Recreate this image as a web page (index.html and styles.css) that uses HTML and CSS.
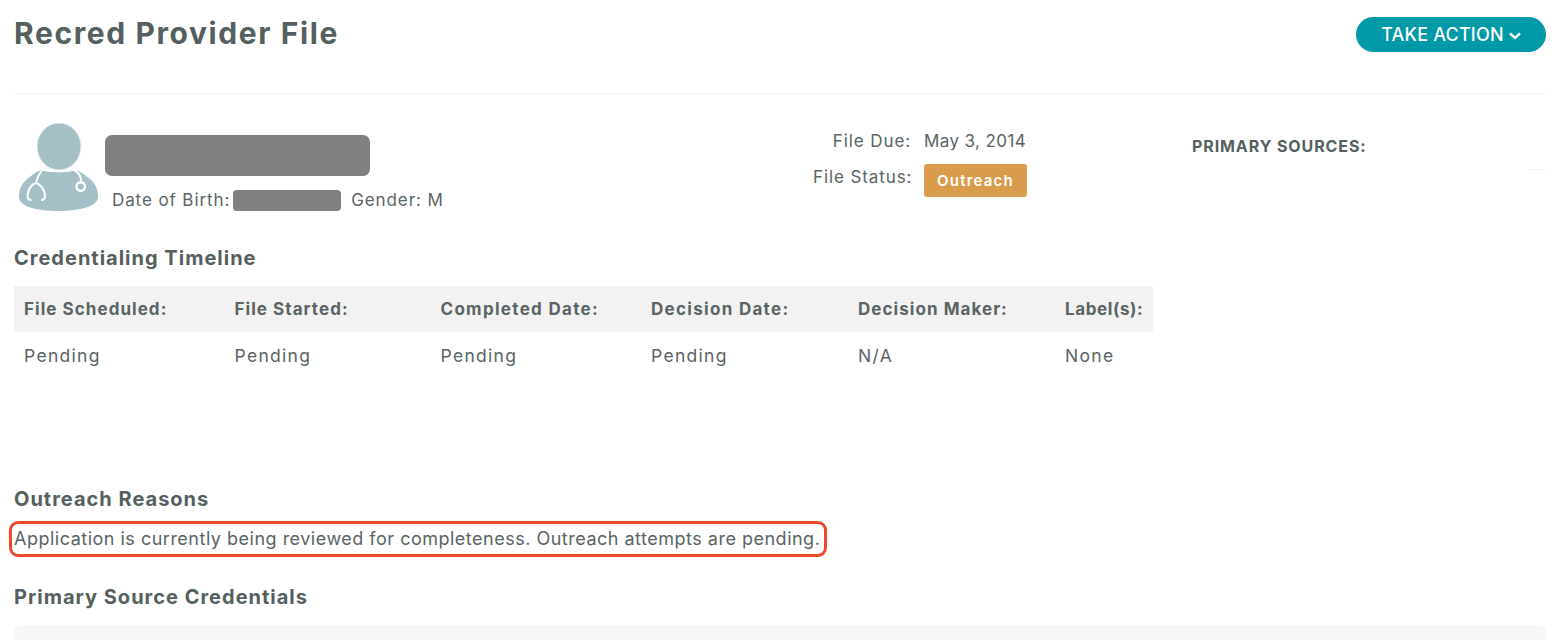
FILE: index.html
```html
<!DOCTYPE html>
<html lang="en">
<head>
<meta charset="utf-8">
<title>Recred Provider File</title>
<link rel="stylesheet" href="styles.css">
</head>
<body>
<div class="page">
  <header class="top">
    <h1>Recred Provider File</h1>
    <button class="action">TAKE ACTION
      <svg class="chev" viewBox="0 0 12 8" width="12" height="8"><path d="M1 1.500 6 6l5-4.500" fill="none" stroke="#fff" stroke-width="2.400"/></svg>
    </button>
  </header>
  <div class="main">
    <div class="left">
      <section class="profile">
        <div class="person">
          <svg class="avatar" viewBox="0 0 82 90" width="82" height="90">
            <path d="M2 74c0-5 1-11 6-16 5-5 11-9 16-11 5 3 30 3 35 0 5 2 11 6 16 11 5 5 6 11 6 16 0 9-18 14-40 14S2 83 2 74z" fill="#a5bfc7"/>
            <ellipse cx="42" cy="23.500" rx="22" ry="23.500" fill="#a5bfc7" stroke="#e6eef0" stroke-width="1"/>
            <path d="M25 47c-2 3-5 8-6 13M14.500 77c-2 0-4-1-4-4 0-6 4-12 8.500-13 4.500 1 9 7 9 13 0 3-2 4-4 4" fill="none" stroke="#fff" stroke-width="2"/>
            <path d="M57 47c4 2 7 6 7.500 11.500" fill="none" stroke="#fff" stroke-width="2"/>
            <circle cx="63.700" cy="63.500" r="4.300" fill="none" stroke="#fff" stroke-width="2.400"/>
          </svg>
          <div class="identity">
            <div class="redact name"></div>
            <div class="dob"><span>Date of Birth:</span><span class="redact dobval"></span><span class="gender">Gender: M</span></div>
          </div>
        </div>
        <div class="file">
          <div class="filerow"><span class="lbl">File Due:</span><span class="due">May 3, 2014</span></div>
          <div class="filerow status"><span class="lbl">File Status:</span><span class="badge">Outreach</span></div>
        </div>
      </section>
      <h2 class="h-time">Credentialing Timeline</h2>
      <div class="timeline">
        <div class="cell head">File Scheduled:</div>
        <div class="cell head">File Started:</div>
        <div class="cell head wide">Completed Date:</div>
        <div class="cell head wide">Decision Date:</div>
        <div class="cell head">Decision Maker:</div>
        <div class="cell head narrow">Label(s):</div>
        <div class="cell">Pending</div>
        <div class="cell">Pending</div>
        <div class="cell">Pending</div>
        <div class="cell">Pending</div>
        <div class="cell">N/A</div>
        <div class="cell">None</div>
      </div>
    </div>
    <aside class="right">
      <h3>PRIMARY SOURCES:</h3>
      <div class="tick"></div>
    </aside>
  </div>
  <h2 class="h-out">Outreach Reasons</h2>
  <p class="reason"><span class="mark">Application is currently being reviewed for completeness. Outreach attempts are pending.</span></p>
  <h2 class="h-prim">Primary Source Credentials</h2>
  <div class="panel"></div>
</div>
</body>
</html>
```
FILE: styles.css
```css
* { box-sizing: border-box; }
html, body { margin: 0; height: 640px; overflow: hidden; background: #fff; }
body { font-family: Inter, "Open Sans", sans-serif; color: #5a6464; font-size: 17px; letter-spacing: 0.9px; }
.page { padding: 0 16px 0 14px; }
.top { display: flex; justify-content: space-between; align-items: flex-start; height: 94px; border-bottom: 1px solid #eee; }
h1 { margin: 15px 0 0; font-size: 30px; line-height: 36px; font-weight: 700; color: #555f5f; letter-spacing: 1.600px; }
.action { margin-top: 17px; width: 190px; height: 35px; border: 0; border-radius: 18px; background: #0099a8; color: #fff; font: 500 18px Inter, sans-serif; letter-spacing: 0.2px; display: flex; align-items: center; justify-content: center; gap: 5px; padding: 0; }
.chev { margin-top: 3px; }
.main { display: flex; }
.left { width: 1139px; }
.profile { display: flex; height: 122px; padding-top: 29px; }
.person { display: flex; width: 760px; margin-left: 3px; }
.avatar { flex: none; }
.identity { margin-left: 6px; padding-top: 12px; }
.redact { background: #808080; }
.name { width: 265px; height: 41px; border-radius: 7px; }
.dob { display: flex; align-items: center; margin: 10px 0 0 7px; height: 28px; }
.dobval { width: 108px; height: 21px; border-radius: 4px; margin: 0 10px 0 3px; }
.file { margin-left: 36px; padding-top: 5px; }
.filerow { display: flex; gap: 13px; align-items: center; height: 26px; }
.lbl { width: 98px; text-align: right; white-space: nowrap; direction: rtl; unicode-bidi: plaintext; }
.due { letter-spacing: 0.4px; }
.filerow.status { margin-top: 10px; height: 33px; align-items: flex-start; }
.filerow.status .lbl { padding-top: 3px; }
.badge { width: 103px; height: 33px; background: #d99b4c; color: #fff; border-radius: 3px; font-size: 15px; font-weight: 600; letter-spacing: 1.2px; display: flex; align-items: center; justify-content: center; }
h2 { margin: 0; font-size: 20px; line-height: 26px; font-weight: 700; color: #555f5f; letter-spacing: 1px; }
.h-time { margin-top: 29px; }
.timeline { display: grid; grid-template-columns: 210.500px 206px 210.500px 207px 207px 98px; margin-top: 15px; }
.cell { height: 47px; display: flex; align-items: center; padding-left: 10px; font-size: 17.500px; letter-spacing: 1.300px; }
.head { background: #f2f2f2; font-size: 17px; font-weight: 700; letter-spacing: 1.050px; height: 46px; }
.head.wide { letter-spacing: 1.300px; }
.head.narrow { letter-spacing: 0.600px; }
.right { padding: 41px 0 0 39px; width: 393px; position: relative; }
h3 { margin: 0; font-size: 16px; line-height: 22px; font-weight: 700; color: #555f5f; letter-spacing: 0.900px; }
.tick { position: absolute; right: 0; top: 75px; width: 18px; height: 1px; background: #f0f0f0; }
.h-out { margin-top: 107px; }
.reason { margin: 14px 0 0; font-size: 18px; line-height: 26px; letter-spacing: 0.500px; }
.mark { display: inline-block; outline: 3px solid #ea4a2a; outline-offset: 2px; border-radius: 4px; padding: 0 2px 0 0; }
.h-prim { margin-top: 32px; }
.panel { margin-top: 15px; height: 30px; background: #f7f7f7; border-radius: 8px 8px 0 0; }
```
